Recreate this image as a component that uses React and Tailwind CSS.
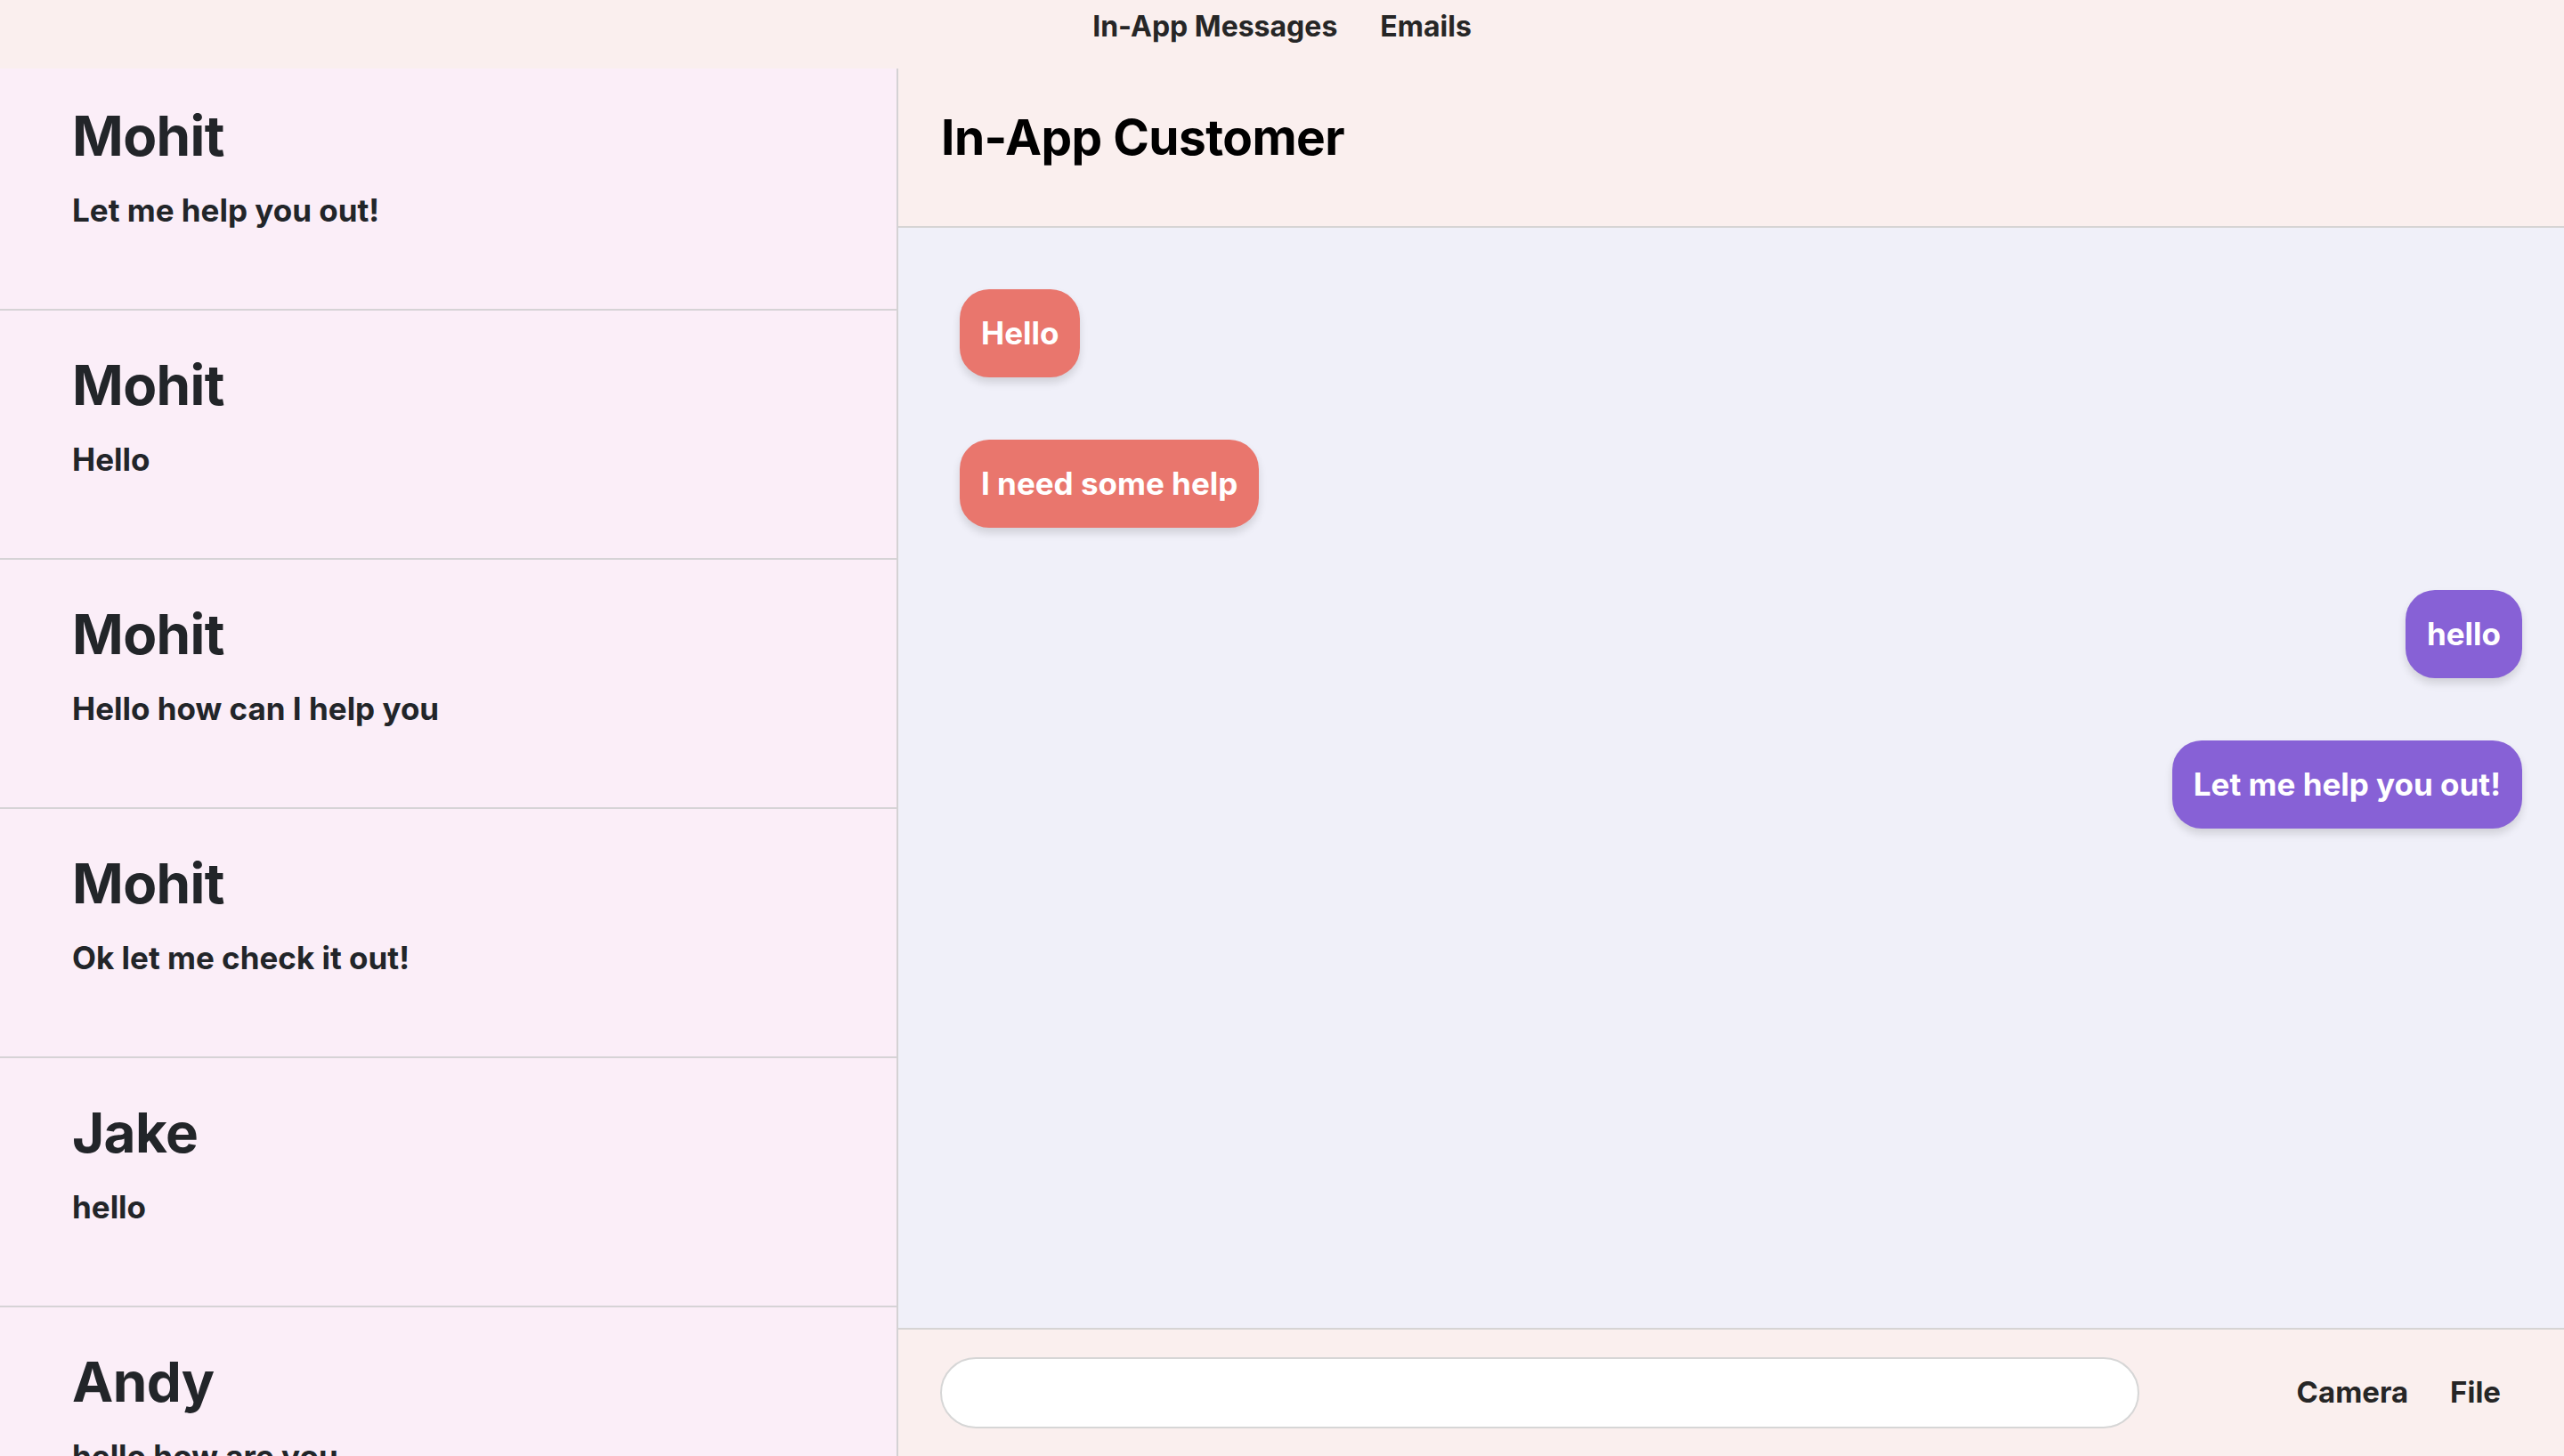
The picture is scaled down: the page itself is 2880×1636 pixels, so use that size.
const conversations = [
  { name: "Mohit", preview: "Let me help you out!" },
  { name: "Mohit", preview: "Hello" },
  { name: "Mohit", preview: "Hello how can I help you" },
  { name: "Mohit", preview: "Ok let me check it out!" },
  { name: "Jake", preview: "hello" },
  { name: "Andy", preview: "hello how are you" },
];

const messages = [
  { text: "Hello", mine: false },
  { text: "I need some help", mine: false },
  { text: "hello", mine: true },
  { text: "Let me help you out!", mine: true },
];

function ConversationItem({ name, preview }) {
  return (
    <div className="h-[280px] shrink-0 border-b-2 border-[#d6d3d6] px-[81px] pt-[45px]">
      <div className="text-[62px] font-bold leading-[1.25] tracking-[-0.01em] text-[#222529]">{name}</div>
      <div className="mt-[22px] text-[35px] font-bold leading-[1.3] text-[#222529]">{preview}</div>
    </div>
  );
}

function Bubble({ text, mine }) {
  return (
    <div className={mine ? "flex justify-end" : "flex justify-start"}>
      <div
        className={
          "flex h-[99px] items-center rounded-[33px] px-[24px] text-[35px] font-bold text-white shadow-[0_6px_10px_rgba(0,0,0,0.13)] " +
          (mine ? "bg-[#8761d6]" : "bg-[#e9766d]")
        }
      >
        {text}
      </div>
    </div>
  );
}

export default function App() {
  return (
    <div
      className="flex h-[1636px] w-[2880px] flex-col overflow-hidden"
      style={{ fontFamily: "Inter, 'Open Sans', sans-serif" }}
    >
      <nav className="flex h-[77px] shrink-0 items-start justify-center gap-[48px] bg-[#faefee] pt-[6px] text-[32px] font-bold text-[#262626]">
        <span>In-App Messages</span>
        <span>Emails</span>
      </nav>

      <div className="flex min-h-0 flex-1">
        <aside className="w-[1009px] shrink-0 overflow-hidden border-r-2 border-[#d4d2d4] bg-[#fbeef8]">
          <div className="-mt-[8px] flex flex-col">
            {conversations.map((c, i) => (
              <ConversationItem key={i} {...c} />
            ))}
          </div>
        </aside>

        <section className="flex min-w-0 flex-1 flex-col">
          <header className="flex h-[179px] shrink-0 items-center border-b-2 border-[#d6d4d4] bg-[#faefee] px-[48px] pb-[22px]">
            <h1 className="text-[55px] font-bold tracking-[-0.01em] text-black">In-App Customer</h1>
          </header>

          <div className="flex flex-1 flex-col gap-[70px] bg-[#f0f0f9] pl-[69px] pr-[47px] pt-[69px]">
            {messages.map((m, i) => (
              <Bubble key={i} {...m} />
            ))}
          </div>

          <footer className="flex h-[144px] shrink-0 items-center border-t-2 border-[#d6d4d4] bg-[#faefee] pl-[47px] pr-[71px]">
            <input
              className="h-[80px] w-[1347px] rounded-full border-2 border-[#d6d6d6] bg-white px-[30px] text-[32px] outline-none"
              type="text"
            />
            <div className="ml-auto flex gap-[47px] text-[33px] font-bold text-[#262626]">
              <span>Camera</span>
              <span>File</span>
            </div>
          </footer>
        </section>
      </div>
    </div>
  );
}
